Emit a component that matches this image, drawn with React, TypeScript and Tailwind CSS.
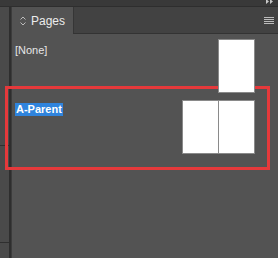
import React from 'react';

function Page({ className = '' }: { className?: string }) {
  return <div className={`w-[37px] h-[54px] bg-white border border-[#8a8a8a] ${className}`} />;
}

export default function App() {
  return (
    <div className="relative w-[278px] h-[258px] flex flex-col bg-[#535353] overflow-hidden" style={{ fontFamily: '"Liberation Sans", Arial, sans-serif' }}>
      {/* top strip */}
      <div className="h-[7px] bg-[#393939] border-b border-[#2e2e2e] flex justify-end pr-[4px]">
        <svg width="8" height="5" viewBox="0 0 8 5" className="-mt-[1px]">
          <path d="M0 0 L3 2.5 L0 5 Z M4 0 L7 2.5 L4 5 Z" fill="#c8c8c8" />
        </svg>
      </div>

      <div className="flex flex-1">
        {/* left dock strip */}
        <div className="w-[9px] bg-[#4a4a4a] flex flex-col">
          <div className="h-[138px]" />
          <div className="h-px bg-[#2f2f2f]" />
          <div className="h-[96px]" />
          <div className="h-px bg-[#2f2f2f]" />
        </div>
        <div className="w-[3px] bg-[#2e2e2e] border-r border-[#3c3c3c]" />

        {/* pages panel */}
        <div className="flex-1 flex flex-col">
          <div className="h-[27px] flex bg-[#424242] border-b border-[#333333]">
            <div className="w-[61px] bg-[#535353] flex items-center gap-[5px] pl-[8px] -mb-px">
              <svg width="6" height="10" viewBox="0 0 6 10">
                <path d="M0.5 3.5 L3 1 L5.5 3.5 M0.5 6.5 L3 9 L5.5 6.5" fill="none" stroke="#bdbdbd" strokeWidth="1" />
              </svg>
              <span className="text-[12px] text-[#ececec]">Pages</span>
            </div>
            <div className="flex-1 border-l border-[#363636] flex items-center justify-end pr-[4px]">
              <div className="flex flex-col gap-[1px] w-[10px]">
                <div className="h-px bg-[#bcbcbc]" />
                <div className="h-px bg-[#bcbcbc]" />
                <div className="h-px bg-[#bcbcbc]" />
                <div className="h-px bg-[#bcbcbc]" />
              </div>
            </div>
          </div>

          <div className="flex-1 flex flex-col">
            <div className="flex justify-between pl-[3px] pr-[23px] pt-[5px] h-[61px]">
              <span className="text-[11px] text-[#e6e6e6] mt-[4px] leading-[14px]">[None]</span>
              <Page className="relative z-10" />
            </div>
            <div className="flex justify-between pl-[3px] pr-[23px] pt-[5px]">
              <span className="self-start mt-[3px] bg-[#2f84dd] text-white text-[11px] font-bold leading-[13px] px-[1px]">A-Parent</span>
              <div className="flex">
                <Page />
                <Page className="-ml-px" />
              </div>
            </div>
          </div>
        </div>
      </div>

      {/* highlight box annotation */}
      <div className="absolute left-[5px] top-[86px] w-[265px] h-[84px] border-[3px] border-[#e5393b]" />
    </div>
  );
}
